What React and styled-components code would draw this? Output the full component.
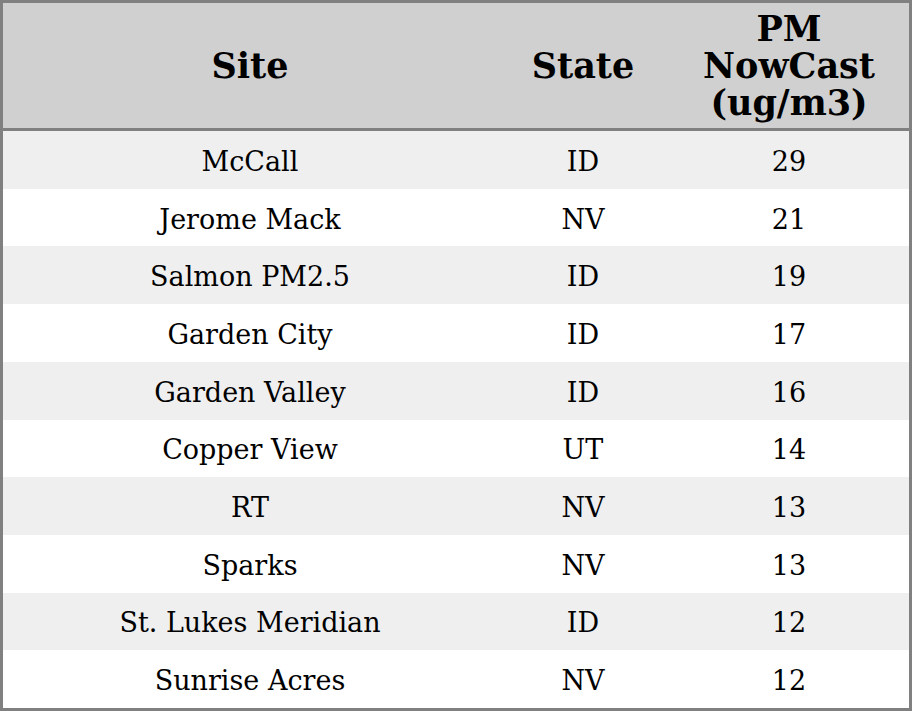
import React from 'react';
import styled, { createGlobalStyle } from 'styled-components';

const rows = [
  ['McCall', 'ID', 29],
  ['Jerome Mack', 'NV', 21],
  ['Salmon PM2.5', 'ID', 19],
  ['Garden City', 'ID', 17],
  ['Garden Valley', 'ID', 16],
  ['Copper View', 'UT', 14],
  ['RT', 'NV', 13],
  ['Sparks', 'NV', 13],
  ['St. Lukes Meridian', 'ID', 12],
  ['Sunrise Acres', 'NV', 12],
];

function App() {
  return (
    <>
      <GlobalStyle />
      <Table>
        <HeadRow>
          <HeadCell>Site</HeadCell>
          <HeadCell>State</HeadCell>
          <HeadCell>PM<br />NowCast<br />(ug/m3)</HeadCell>
        </HeadRow>
        {rows.map(([site, state, value], i) => (
          <Row key={site} $odd={i % 2 === 0}>
            <Cell>{site}</Cell>
            <Cell>{state}</Cell>
            <Cell>{value}</Cell>
          </Row>
        ))}
      </Table>
    </>
  );
}

export default App;

const GlobalStyle = createGlobalStyle`
  html, body {
    margin: 0;
    padding: 0;
    background: #ffffff;
  }
  body {
    font-family: "DejaVu Serif", serif;
    color: #000;
  }
`;

const Table = styled.div`
  width: 912px;
  height: 711px;
  box-sizing: border-box;
  border: 3px solid #808080;
  display: grid;
  grid-template-rows: 128px repeat(10, 1fr);
`;

const HeadRow = styled.div`
  display: grid;
  grid-template-columns: 494px 172px 1fr;
  background: #d0d0d0;
  border-bottom: 3px solid #808080;
`;

const HeadCell = styled.div`
  display: flex;
  align-items: center;
  justify-content: center;
  text-align: center;
  font-weight: bold;
  font-size: 35px;
  line-height: 37px;
`;

const Row = styled.div`
  display: grid;
  grid-template-columns: 494px 172px 1fr;
  background: ${(p) => (p.$odd ? '#efefef' : '#ffffff')};
`;

const Cell = styled.div`
  display: flex;
  align-items: center;
  justify-content: center;
  padding-top: 3px;
  font-size: 27px;
`;
